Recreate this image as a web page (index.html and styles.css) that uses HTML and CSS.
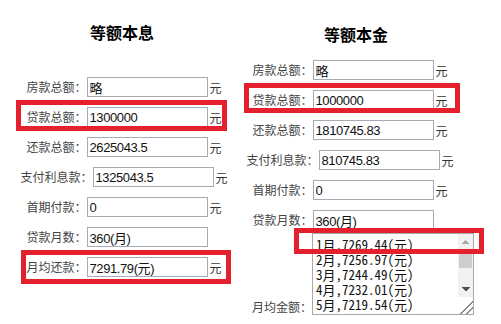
FILE: index.html
```html
<!DOCTYPE html>
<html lang="zh-CN">
<head>
  <meta charset="UTF-8" />
  <meta name="viewport" content="width=device-width, initial-scale=1.0" />
  <title>房贷计算</title>
  <link rel="stylesheet" href="styles.css">
</head>
<body>
  <div class="page">
    <div class="panel panel-left">
      <h3 class="title">等额本息</h3>
      <div class="row"><span class="label">房款总额：</span><input class="field" value="略"><span class="unit">元</span></div>
      <div class="row hl hl-loan-a"><span class="label">贷款总额：</span><input class="field" value="1300000"><span class="unit">元</span></div>
      <div class="row"><span class="label">还款总额：</span><input class="field" value="2625043.5"><span class="unit">元</span></div>
      <div class="row"><span class="label">支付利息款：</span><input class="field" value="1325043.5"><span class="unit">元</span></div>
      <div class="row"><span class="label">首期付款：</span><input class="field" value="0"><span class="unit">元</span></div>
      <div class="row"><span class="label">贷款月数：</span><input class="field" value="360(月)"><span class="unit blank">元</span></div>
      <div class="row hl hl-month"><span class="label">月均还款：</span><input class="field" value="7291.79(元)"><span class="unit">元</span></div>
    </div>

    <div class="panel panel-right">
      <h3 class="title">等额本金</h3>
      <div class="row"><span class="label">房款总额：</span><input class="field" value="略"><span class="unit">元</span></div>
      <div class="row hl hl-loan-b"><span class="label">贷款总额：</span><input class="field" value="1000000"><span class="unit">元</span></div>
      <div class="row"><span class="label">还款总额：</span><input class="field" value="1810745.83"><span class="unit">元</span></div>
      <div class="row"><span class="label">支付利息款：</span><input class="field" value="810745.83"><span class="unit">元</span></div>
      <div class="row"><span class="label">首期付款：</span><input class="field" value="0"><span class="unit">元</span></div>
      <div class="row"><span class="label">贷款月数：</span><input class="field" value="360(月)"><span class="unit blank">元</span></div>
      <div class="row list-row">
        <span class="label">月均金额：</span>
        <span class="list-wrap">
          <textarea class="list">1月,7269.44(元)
2月,7256.97(元)
3月,7244.49(元)
4月,7232.01(元)
5月,7219.54(元)
6月,7207.06(元)
7月,7194.58(元)
8月,7182.11(元)
9月,7169.63(元)
10月,7157.15(元)
11月,7144.68(元)
12月,7132.20(元)</textarea>
          <span class="scrollbar">
            <span class="sb-btn sb-up"></span>
            <span class="sb-track"><span class="sb-thumb"></span></span>
            <span class="sb-btn sb-down"></span>
            <span class="sb-corner"></span>
          </span>
        </span>
      </div>
    </div>
  </div>
</body>
</html>
```

FILE: styles.css
```css
body {
  margin: 0;
  padding: 0;
  background-color: #fff;
  font-family: "Noto Sans CJK SC", sans-serif;
  color: #333;
}

.page {
  display: flex;
  align-items: flex-start;
}

.panel-left {
  width: 248px;
  padding-top: 22px;
}

.panel-right {
  width: 204px;
  padding-top: 24px;
}

.title {
  margin: 0;
  height: 20px;
  font-size: 16px;
  line-height: 20px;
  font-weight: bold;
  color: #000;
  text-align: center;
}

.panel-left .title {
  margin-bottom: 30px;
  padding-right: 4px;
}

.panel-right .title {
  margin-bottom: 11px;
  padding-left: 12px;
}

.row {
  display: flex;
  align-items: center;
  justify-content: center;
  height: 30px;
  white-space: nowrap;
}

.label {
  font-size: 12px;
  line-height: 16px;
  color: #444;
}

.field {
  box-sizing: border-box;
  width: 121px;
  height: 20px;
  margin: 0;
  padding: 0 2px;
  border: 1px solid #a5acb5;
  font-family: "Liberation Sans", "Noto Sans CJK SC", sans-serif;
  font-size: 13px;
  letter-spacing: -0.4px;
  color: #111;
  background: #fff;
}

.unit {
  margin-left: 2px;
  font-size: 12px;
  color: #333;
}

.unit.blank {
  visibility: hidden;
}

/* red marker boxes drawn over the rows */
.hl {
  position: relative;
}

.hl::after {
  content: "";
  position: absolute;
  border: 5px solid #e3202b;
  box-sizing: border-box;
  pointer-events: none;
}

.hl-loan-a::after {
  top: -2px;
  left: 16px;
  width: 211px;
  height: 31px;
}

.hl-month::after {
  top: -2px;
  left: 21px;
  width: 210px;
  height: 34px;
}

.hl-loan-b::after {
  top: -2px;
  left: -4px;
  width: 216px;
  height: 30px;
}

.list-row {
  justify-content: flex-start;
  align-items: flex-end;
  height: auto;
  margin-top: -2px;
  padding-left: 4px;
}

.list-row .label {
  line-height: 14px;
  padding-bottom: 1px;
}

.list-wrap {
  position: relative;
  display: block;
  flex-shrink: 0;
}

.list-wrap::after {
  content: "";
  position: absolute;
  top: -5px;
  left: -18px;
  width: 190px;
  height: 26px;
  border: 5px solid #e3202b;
  box-sizing: border-box;
  pointer-events: none;
}

.list {
  display: block;
  box-sizing: border-box;
  width: 162px;
  height: 82px;
  margin: 0;
  padding: 3px 18px 3px 3px;
  border: 1px solid #a9a9a9;
  font-family: "Noto Sans Mono CJK SC", "Liberation Mono", monospace;
  font-size: 13px;
  line-height: 15px;
  color: #111;
  background: #fff;
  overflow: hidden;
  resize: none;
}

/* classic scrollbar drawn over the textarea's right edge */
.scrollbar {
  position: absolute;
  top: 1px;
  right: 1px;
  bottom: 1px;
  width: 15px;
  display: flex;
  flex-direction: column;
}

.sb-btn {
  height: 16px;
  background-color: #f1f1f1;
  background-repeat: no-repeat;
  background-size: 4px 4px;
}

.sb-up {
  background-image:
    linear-gradient(to bottom right, transparent 50%, #a8a8a8 50%),
    linear-gradient(to bottom left, transparent 50%, #a8a8a8 50%);
  background-position: 4px 6px, 8px 6px;
}

.sb-down {
  background-image:
    linear-gradient(to top right, transparent 50%, #505050 50%),
    linear-gradient(to top left, transparent 50%, #505050 50%);
  background-position: 4px 6px, 8px 6px;
}

.sb-track {
  flex: 1;
  background: #f1f1f1;
}

.sb-thumb {
  display: block;
  height: 16px;
  margin: 2px 1px 0;
  background: #cdcdcd;
}

.sb-corner {
  height: 17px;
  background-color: #fff;
  background-image: linear-gradient(135deg, transparent 58%, #8a8a8a 58%, #8a8a8a 64%, transparent 64%, transparent 78%, #8a8a8a 78%, #8a8a8a 84%, transparent 84%);
}
```
